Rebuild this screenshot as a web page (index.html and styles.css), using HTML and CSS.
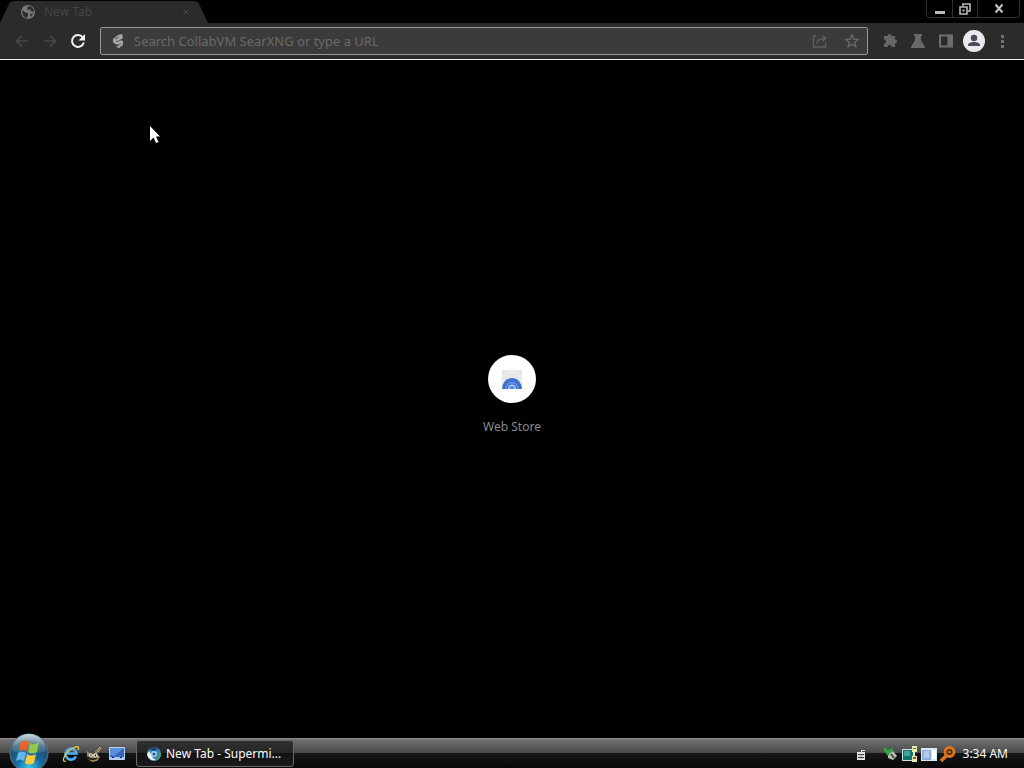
FILE: index.html
```html
<!DOCTYPE html>
<html lang="en">
<head>
<meta charset="utf-8">
<title>New Tab</title>
<link rel="stylesheet" href="styles.css">
</head>
<body>
<div class="desktop">
  <header class="browser">
    <div class="tabstrip">
      <div class="tab">
        <svg class="tab-shape" viewBox="0 0 208 23" preserveAspectRatio="none" aria-hidden="true"><path d="M0 23L9 4Q11 1 14 1H194Q197 1 199 4L208 23Z"/></svg>
        <svg class="tab-icon" viewBox="0 0 16 16" aria-hidden="true"><circle cx="8" cy="8" r="7" fill="#777"/><path fill="#2b2b2b" d="M2.500 6L5 8.500 8 9v2l-1 3C4 13.500 2 11 2.500 6zM9 2l-2 2 1 2 2-1 1 2 3 1c0-3-2-5.500-5-6zM10 10l3-.5-2 3.500z"/></svg>
        <span class="tab-title">New Tab</span>
        <button class="tab-close" aria-label="Close tab"><svg viewBox="0 0 8 8"><path d="M1.500 1.500l5 5m0-5l-5 5" stroke="#4b4b4b" fill="none"/></svg></button>
      </div>
      <div class="window-controls">
        <button aria-label="Minimize"><svg viewBox="0 0 12 12"><path fill="#bbb" d="M1 8h10v3H1z"/></svg></button>
        <button aria-label="Restore"><svg viewBox="0 0 12 12"><path d="M4 3V1h7v7H9M1 4h7v7H1z" stroke="#bbb" stroke-width="1.600" fill="none"/><path fill="#bbb" d="M3.500 6.500h2v2h-2z"/></svg></button>
        <button class="close" aria-label="Close"><svg viewBox="0 0 12 12"><path d="M2.500 1.500l7 8m0-8l-7 8" stroke="#c5c5c5" stroke-width="2" fill="none"/></svg></button>
      </div>
    </div>
    <div class="toolbar">
      <nav class="nav">
        <button aria-label="Back"><svg viewBox="0 0 16 16"><path d="M14 8H3m5-5.500L2.500 8 8 13.500" stroke="#484848" stroke-width="1.700" fill="none"/></svg></button>
        <button aria-label="Forward"><svg viewBox="0 0 16 16"><path d="M2 8h11M8 2.500L13.500 8 8 13.500" stroke="#484848" stroke-width="1.700" fill="none"/></svg></button>
        <button aria-label="Reload"><svg viewBox="0 0 16 16"><path d="M12.800 4.300A6 6 0 1 0 13.800 9.500" stroke="#f2f2f2" stroke-width="2" fill="none"/><path d="M15 1v6.500H8.500z" fill="#f2f2f2"/></svg></button>
      </nav>
      <div class="omnibox">
        <svg class="search-logo" viewBox="0 0 16 16" aria-hidden="true"><path fill="#a6a6a6" d="M3 6l5-4 4-1 1 4-3 2 3 1v4l-4 3-3-1 3-2-4-1-2-2z"/><path d="M5 6l4-2M6 9l5-2M8 12l3-1" stroke="#5c5c5c"/></svg>
        <input class="address" type="text" placeholder="Search CollabVM SearXNG or type a URL" aria-label="Search or type a URL">
        <button aria-label="Share"><svg viewBox="0 0 16 16"><path d="M4 3H1.500v11h12V10M4.500 10.500C5 7 8 5.500 13 5.500M10.500 2.500l3.500 3-3.500 3" stroke="#606060" stroke-width="1.300" fill="none"/></svg></button>
        <button aria-label="Bookmark"><svg viewBox="0 0 16 16"><path d="M8 2l1.700 4.200 4.500.3-3.500 2.800 1.200 4.400L8 11.300l-3.900 2.400 1.200-4.400L1.800 6.500l4.500-.3z" stroke="#6c6c6c" stroke-width="1.300" fill="none"/></svg></button>
      </div>
      <div class="actions">
        <button aria-label="Extensions"><svg viewBox="0 0 16 16"><path fill="#666" d="M2 3h3.500a2 2 0 0 1 4 0H13v3.500a2 2 0 0 1 0 4V14H9.500a2 2 0 0 0-4 0H2v-3.500a2 2 0 0 0 0-4z"/></svg></button>
        <button aria-label="Experiments"><svg viewBox="0 0 16 16"><path fill="#686868" d="M4 1h8v2h-1v4l4 7v1H1v-1l4-7V3H4z"/></svg></button>
        <button aria-label="Side panel"><svg viewBox="0 0 16 16"><path d="M2 2.500h12v11H2z" fill="none" stroke="#6e6e6e" stroke-width="2"/><path fill="#6e6e6e" d="M9.500 3H14v10H9.500z"/></svg></button>
        <button class="profile" aria-label="Profile"><svg viewBox="0 0 24 24"><circle cx="12" cy="12" r="11" fill="#e8eaed"/><circle cx="12" cy="9" r="3.200" fill="#4b4d58"/><path fill="#4b4d58" d="M6 17v-1c0-4 12-4 12 0v1z"/></svg></button>
        <button aria-label="Menu"><svg viewBox="0 0 16 16"><path fill="#707070" d="M7 2h3v3H7zm0 5h3v3H7zm0 5h3v3H7z"/></svg></button>
      </div>
    </div>
  </header>
  <main class="page">
    <a class="shortcut" href="#">
      <span class="shortcut-icon"><svg viewBox="0 0 24 24" aria-hidden="true"><path fill="#e6e8eb" d="M2 3h20v18H2z"/><path fill="#f5f6f7" d="M9 5h6v1H9z"/><path fill="#3f70ce" d="M2 22a10 11 0 0 1 20 0z"/><path d="M6 22a6 6.500 0 0 1 12 0" fill="none" stroke="#6b95e2" stroke-width="1.500"/><path d="M8.500 22a3.500 4 0 0 1 7 0" fill="#5b8de5" stroke="#dce7fc"/></svg></span>
      <span>Web Store</span>
    </a>
  </main>
  <footer class="taskbar">
    <button class="start" aria-label="Start">
      <svg viewBox="0 0 40 40">
        <defs>
          <radialGradient id="orb" cx=".5" cy=".9" r=".9"><stop offset="0" stop-color="#35c9ee"/><stop offset=".4" stop-color="#17669b"/><stop offset=".75" stop-color="#254d68"/><stop offset="1" stop-color="#9eb3bf"/></radialGradient>
          <linearGradient id="shine" x2="0" y2="1"><stop offset="0" stop-color="#d5e2e8" stop-opacity=".8"/><stop offset="1" stop-color="#7aa0b3" stop-opacity=".2"/></linearGradient>
        </defs>
        <circle cx="20" cy="20" r="19" fill="url(#orb)" stroke="#55798e"/>
        <path d="M3 18a17 17 0 0 1 34 0Q20 24 3 18z" fill="url(#shine)"/>
        <path fill="#ef6227" d="M12 9q4-3 8 0l-2 9q-4-3-8 0z"/><path fill="#91ca49" d="M21 10q4 3 9-1l-2 10q-5 3-9 0z"/><path fill="#62b9ef" d="M9 20q4-3 8 0l-2 8q-4-3-8 0z"/><path fill="#ffcb3d" d="M18 21q4 3 9 0l-2 9q-5 3-9 0z"/>
      </svg>
    </button>
    <div class="quick-launch">
      <button aria-label="Internet Explorer"><svg viewBox="0 0 18 18"><path d="M14 11.500A5.500 5.500 0 1 1 14.500 8.500H5" fill="none" stroke="#48aff0" stroke-width="2.600"/><path d="M4 16C-1 18 2 9 8 5s10-5 8 0" fill="none" stroke="#e8c74d" stroke-width="1.300"/></svg></button>
      <button aria-label="GIMP"><svg viewBox="0 0 18 18"><path fill="#a18c62" d="M2 6l4 3 4-1 3 2 2 2-3 4-5 1-4-3-1-3z"/><path d="M11 8l5-6" stroke="#d3bd7c" stroke-width="3" stroke-dasharray="1 1"/><path d="M2 12q5 4 10 1" stroke="#28221a" stroke-width="2" fill="none"/><circle cx="6" cy="10" r="1.800" fill="#fff"/><circle cx="10.500" cy="10.500" r="2" fill="#fff"/><circle cx="6" cy="10" r=".8"/><circle cx="10.500" cy="10.500" r=".9"/></svg></button>
      <button aria-label="Show desktop"><svg viewBox="0 0 18 18"><path fill="#3267bb" stroke="#b6d1f1" d="M1.500 2.500h15v12h-15z"/><path fill="#5a90d8" d="M2 3h14L6 11 2 10z"/><path fill="#a4c7ef" d="M2 12h14v2H2z"/><path fill="#225" d="M4 12h2v1H4zm8 0h2v1h-2z"/></svg></button>
    </div>
    <button class="task"><svg viewBox="0 0 16 16" aria-hidden="true"><circle cx="8" cy="8" r="7" fill="#397fc3"/><path fill="#e9f1e9" d="M1 8a7 7 0 0 0 9 6l-3-2-2-4-2-3z"/><path fill="#44a15c" d="M15 7a7 7 0 0 1-6 8l3-4 1-5z"/><path fill="#243e67" d="M3 3a7 7 0 0 1 9 0L8 5z"/><circle cx="8" cy="8" r="3" fill="#a9d4eb"/><circle cx="8" cy="8" r="1.600" fill="#245b8c"/></svg><span>New Tab - Supermi...</span></button>
    <div class="tray">
      <svg class="keyboard" viewBox="0 0 12 12" role="img" aria-label="Input"><path fill="#e4e4e4" d="M2 4h4V2h4v1H7v1h3v8H2z"/><path d="M3 6.500h6M3 9.500h6" stroke="#333"/><path d="M5 6v5m2-5v5" stroke="#777" stroke-width=".5"/></svg>
      <div class="tray-icons">
        <svg viewBox="0 0 18 18" role="img" aria-label="Safely remove hardware"><path fill="#b9beb9" d="M6 9l5-3 4 5-4 4-5-2z"/><path d="M9 9l3 4" stroke="#464b46" stroke-width="2"/><path fill="#35a344" d="M2 2l4 3 5-2v2l-5 6-4-5z"/></svg>
        <svg viewBox="0 0 18 18" role="img" aria-label="Network"><path fill="#16746f" stroke="#d0e4df" d="M1.500 4.500h11v11h-11z"/><path fill="#3ca69a" d="M3 6h6v5H3z"/><path fill="#e6edb0" d="M11 1h5v6h-5zm0 10h5v6h-5z"/><path fill="#36805b" d="M12 3h3v1h-3z"/><path fill="#9b4545" d="M12 12h3v2h-3z"/><path stroke="#e6edb0" d="M13.500 7v4"/></svg>
        <svg viewBox="0 0 18 18" role="img" aria-label="Display"><path fill="#d7e9f7" d="M1 3h16v13H1z"/><path fill="#8eaeda" d="M2 5h9v10H2z"/><path fill="#b4cae6" d="M4 6h5v7H4z"/><path fill="#fff" d="M12 5h4v9h-4z"/></svg>
        <svg viewBox="0 0 18 18" role="img" aria-label="Search"><circle cx="10.500" cy="7" r="4.500" fill="#59300d" stroke="#dc761f" stroke-width="2.800"/><path d="M7 11l-5 5" stroke="#dc761f" stroke-width="3.500"/><path d="M9 7h3" stroke="#efa14f"/></svg>
      </div>
      <time class="clock">3:34 AM</time>
    </div>
  </footer>
  <svg class="cursor" viewBox="0 0 12 18" aria-hidden="true"><path fill="#fff" d="M1 0v15l3.500-3.500L7 17l2.500-1L7 10.500h4z"/></svg>
</div>
</body>
</html>
```
FILE: styles.css
```css
* { box-sizing: border-box; }
body {
  margin: 0;
  background: #000;
  color: #fff;
  font: 12px/16px "Noto Sans", "Open Sans", sans-serif;
}
button {
  display: flex;
  align-items: center;
  justify-content: center;
  padding: 0;
  border: 0;
  background: none;
  color: inherit;
  font: inherit;
}
svg { display: block; flex: none; width: 16px; height: 16px; }
.desktop {
  position: relative;
  display: flex;
  flex-direction: column;
  min-height: 100vh;
}
.browser { border-bottom: 1px solid #e8e8e8; }
.tabstrip { display: flex; justify-content: space-between; height: 23px; }
.tab {
  position: relative;
  display: flex;
  align-items: center;
  gap: 8px;
  width: 208px;
  padding: 0 18px 0 20px;
}
.tab-shape { position: absolute; inset: 0; width: 100%; height: 100%; fill: #2b2b2b; }
.tab-icon, .tab-title, .tab-close { position: relative; }
.tab-title { flex: 1; color: #464646; }
.tab-close svg { width: 8px; height: 8px; }
.window-controls {
  display: flex;
  height: 18px;
  margin-right: 4px;
  border: 1px solid #303030;
  border-top: 0;
  border-radius: 0 0 4px 4px;
}
.window-controls button { width: 25px; }
.window-controls button + button { border-left: 1px solid #303030; }
.window-controls .close { width: 42px; }
.window-controls svg { width: 12px; height: 12px; }
.toolbar {
  display: flex;
  align-items: center;
  height: 36px;
  padding: 0 14px;
  background: #2b2b2b;
}
.nav { display: flex; gap: 12px; margin-right: 14px; }
.omnibox {
  display: flex;
  flex: 1;
  align-items: center;
  gap: 16px;
  height: 28px;
  padding: 0 7px 0 9px;
  border: 1px solid #989898;
  border-radius: 2px;
  background: #3b3b3b;
}
.address {
  flex: 1;
  min-width: 0;
  margin-left: -8px;
  padding: 0;
  border: 0;
  outline: 0;
  background: none;
  color: #ddd;
  font: 13px/18px "Noto Sans", sans-serif;
}
.address::placeholder { color: #6a6a6a; opacity: 1; }
.actions { display: flex; align-items: center; gap: 12px; margin-left: 14px; }
.actions .profile { margin: 0 -4px; }
.profile svg { width: 24px; height: 24px; }
.page {
  display: flex;
  flex: 1;
  align-items: center;
  justify-content: center;
}
.shortcut {
  display: flex;
  flex-direction: column;
  align-items: center;
  gap: 16px;
  padding-bottom: 8px;
  color: #858a90;
  text-decoration: none;
}
.shortcut-icon {
  display: grid;
  place-items: center;
  width: 48px;
  height: 48px;
  border-radius: 50%;
  background: #fff;
}
.shortcut-icon svg { width: 24px; height: 24px; }
.taskbar {
  display: flex;
  align-items: center;
  height: 30px;
  padding: 0 16px 0 9px;
  border-top: 1px solid #8c8c8c;
  background: linear-gradient(#737373, #484848 48%, #161616 50%, #080808);
}
.start { margin-top: -2px; }
.start svg { width: 40px; height: 40px; }
.quick-launch { display: flex; gap: 5px; margin: 0 10px 0 13px; }
.quick-launch svg, .tray-icons svg { width: 18px; height: 18px; }
.task {
  gap: 4px;
  width: 158px;
  height: 27px;
  padding: 0 9px;
  border: 1px solid #696969;
  border-radius: 3px;
  background: linear-gradient(#303030, #262626 48%, #111 50%, #1b1b1b);
}
.task span { flex: 1; text-align: left; white-space: nowrap; }
.tray { display: flex; align-items: center; margin-left: auto; }
.keyboard { width: 12px; height: 12px; margin-right: 15px; }
.tray-icons { display: flex; gap: 1px; }
.clock { margin-left: 6px; white-space: nowrap; }
.cursor { position: absolute; left: 149px; top: 126px; width: 12px; height: 18px; }
```
